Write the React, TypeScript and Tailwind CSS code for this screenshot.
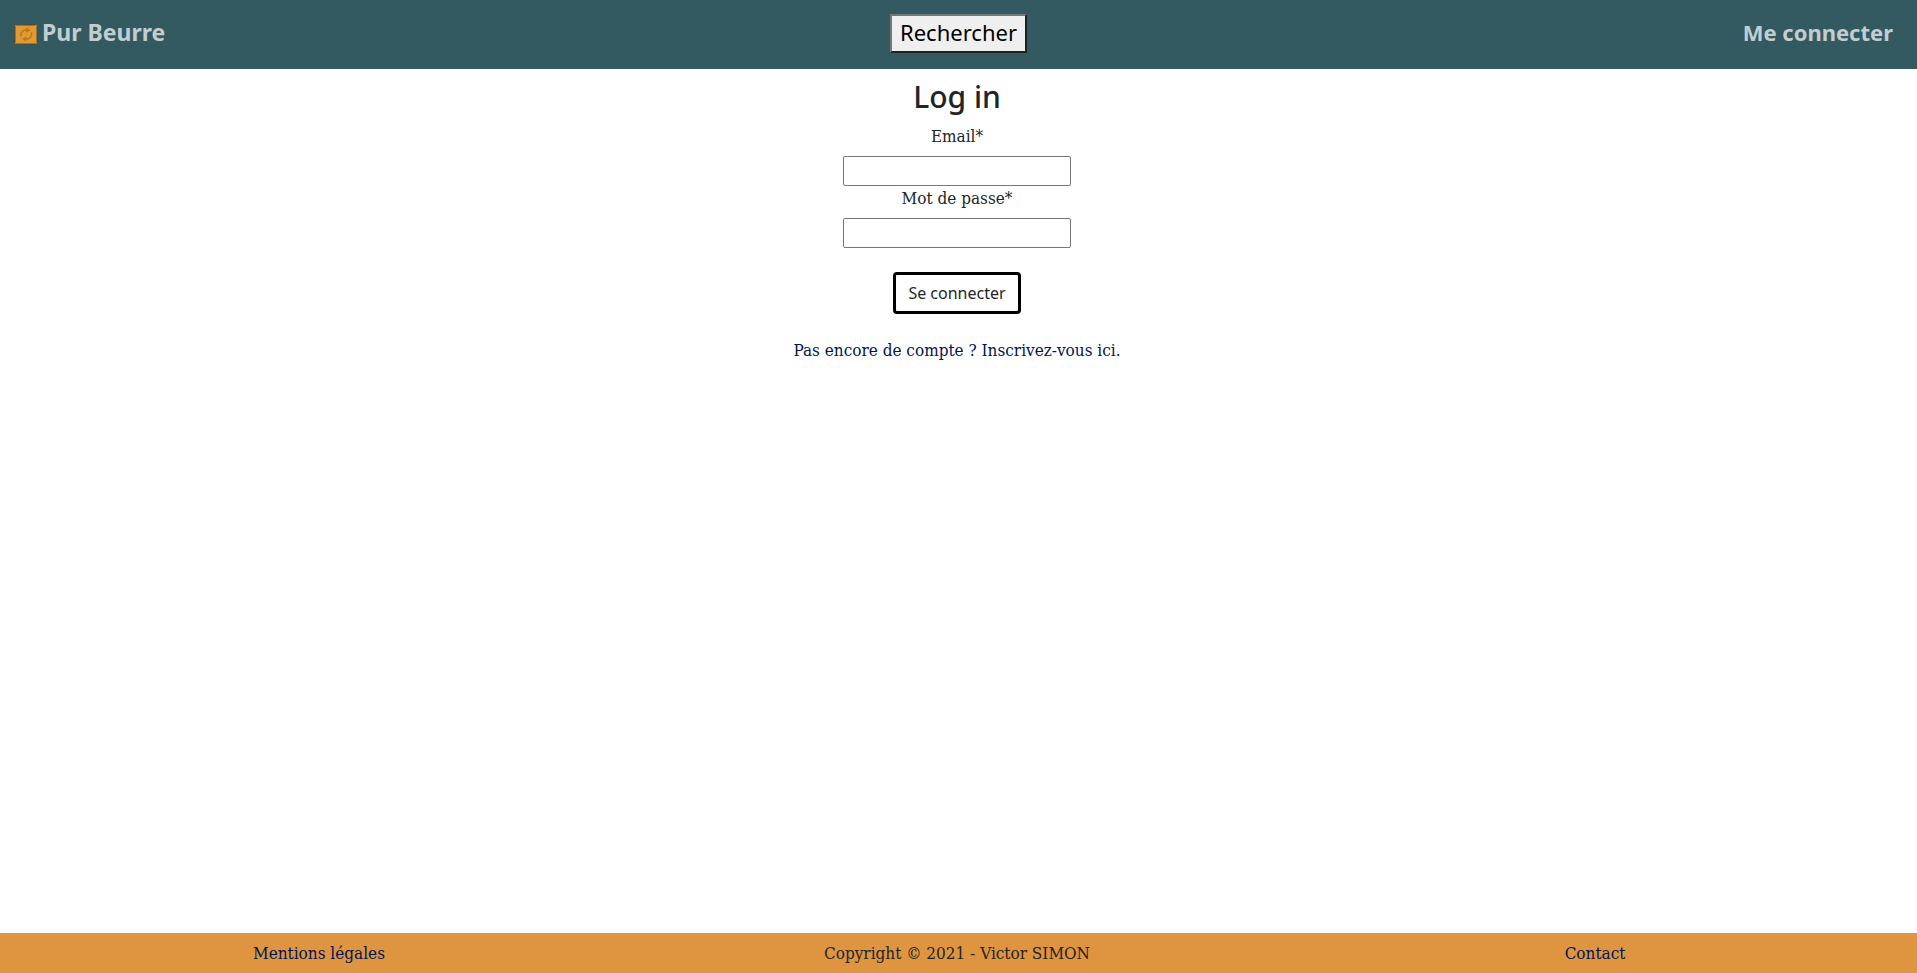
import type { ReactNode } from "react";

const sans = "font-['Noto_Sans','Open_Sans',sans-serif]";
const serif = "font-['DejaVu_Serif_Condensed','DejaVu_Serif',serif]";

function Logo() {
  return (
    <svg viewBox="0 0 24 21" className="h-[21px] w-6" aria-hidden="true">
      <path d="M.5.5 3 1h18l2.500-.5L23 3v15l.5 2.500L21 20H3l-2.500.5L1 18V3z" fill="#e09a35" stroke="#5b4a2c" strokeWidth="1" />
      <g fill="none" stroke="#b97614" strokeWidth="1.500">
        <path d="M7 12.500C6 8.500 9 5.500 13.500 6" />
        <path d="M17.500 8.500c1 4-2 7-6.500 6.500" />
      </g>
      <path d="m12.500 3.500 4 2.700-4.500 2.300zM12 17.500l-4-2.700 4.500-2.300z" fill="#b97614" />
    </svg>
  );
}

function Field({ id, type, label }: { id: string; type: string; label: string }) {
  return (
    <div className="flex flex-col items-center gap-2">
      <label htmlFor={id} className="leading-6">
        {label}
      </label>
      <input id={id} name={id} type={type} className="h-[30px] w-[228px] rounded-xs border border-[#767676] bg-white px-1" />
    </div>
  );
}

function FooterCell({ children }: { children: ReactNode }) {
  return <div className="text-center">{children}</div>;
}

export default function App() {
  return (
    <div className={`flex min-h-screen flex-col bg-white text-[17px] leading-6 text-[#212529] ${serif}`}>
      <header className={`grid h-[69px] grid-cols-3 items-center bg-[#335a60] px-3.5 pb-0.5 text-[22px] leading-8 ${sans}`}>
        <a href="#accueil" className="flex items-center gap-1 justify-self-start pb-1 text-[23px] font-bold text-[#c2cdcf]">
          <span className="pt-1.5">
            <Logo />
          </span>
          Pur Beurre
        </a>
        <button
          type="button"
          className="flex h-[39px] items-center justify-self-center border-2 border-t-[#767676] border-r-[#212121] border-b-[#212121] border-l-[#767676] bg-[#efefef] px-2 pb-1 text-black"
        >
          Rechercher
        </button>
        <a href="#connexion" className="justify-self-end pr-2.5 pb-1 font-bold text-[#c2cdcf]">
          Me connecter
        </a>
      </header>

      <main className="flex grow flex-col items-center pt-2 pr-[3px]">
        <h1 className={`mb-2 text-[30px] leading-[39px] font-medium ${sans}`}>Log in</h1>
        <form className="flex flex-col items-center">
          <Field id="email" type="email" label="Email*" />
          <Field id="password" type="password" label="Mot de passe*" />
          <button type="submit" className={`my-6 h-[42px] rounded-sm border-3 border-black bg-white px-3 text-base ${sans}`}>
            Se connecter
          </button>
        </form>
        <a href="#inscription" className="text-[#001554]">
          Pas encore de compte ? Inscrivez-vous ici.
        </a>
      </main>

      <footer className="grid grid-cols-3 bg-[#df9440] py-2 pr-[3px]">
        <FooterCell>
          <a href="#mentions" className="text-[#001554]">
            Mentions légales
          </a>
        </FooterCell>
        <FooterCell>Copyright © 2021 - Victor SIMON</FooterCell>
        <FooterCell>
          <a href="#contact" className="text-[#001554]">
            Contact
          </a>
        </FooterCell>
      </footer>
    </div>
  );
}
